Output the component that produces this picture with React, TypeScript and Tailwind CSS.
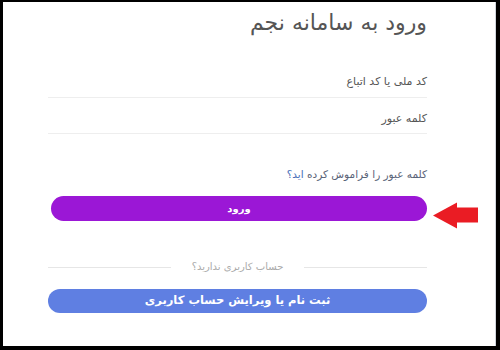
import React from 'react';

export default function App() {
  return (
    <div className="w-[500px] h-[350px] bg-black pt-[2px] pl-[3px] pr-[4px] pb-[4px]" style={{ fontFamily: '"DejaVu Sans", sans-serif' }}>
      <div dir="rtl" className="relative w-full h-full bg-white border-r border-gray-300 flex flex-col pr-[68px] pl-[45px]">
        {/* Title */}
        <h1 className="mt-[7px] text-[22px] leading-[28px] text-[#555] font-normal">ورود به سامانه نجم</h1>

        {/* Fields */}
        <div className="mt-[38px] text-[11px] leading-[14px] text-[#555] pb-[8px] border-b border-[#eee]">کد ملی یا کد اتباع</div>
        <div className="mt-[14px] text-[11px] leading-[14px] text-[#555] pb-[7px] border-b border-[#eee]">کلمه عبور</div>

        {/* Forgot */}
        <div className="mt-[33px] text-[10.5px] leading-[14px] text-[#5a6478]">
          کلمه عبور را فراموش کرده <span className="text-[#4a6fb8]">اید؟</span>
        </div>

        {/* Login button */}
        <div className="relative mt-[15px]">
          <button className="w-[376px] h-[25px] rounded-full bg-[#9b17d6] text-white text-[10px] font-bold flex items-center justify-center">ورود</button>
          <svg className="absolute top-[6px] right-[-52px]" width="46" height="28" viewBox="0 0 46 28">
            <path d="M0 13.5 L24 0.5 L24 5.5 L45 5.5 L45 20.5 L24 20.5 L24 26.5 Z" fill="#ea1c24" />
          </svg>
        </div>

        {/* Divider */}
        <div className="mt-[40px] flex items-center gap-[21px]">
          <div className="flex-1 h-px bg-[#e6e6e6]" />
          <span className="text-[10px] leading-[12px] text-[#aaa]">حساب کاربری ندارید؟</span>
          <div className="flex-1 h-px bg-[#e6e6e6]" />
        </div>

        {/* Register button */}
        <button className="mt-[16px] w-full h-[24px] rounded-full bg-[#5f7fe2] text-white text-[11.5px] font-bold flex items-center justify-center">ثبت نام یا ویرایش حساب کاربری</button>
      </div>
    </div>
  );
}
